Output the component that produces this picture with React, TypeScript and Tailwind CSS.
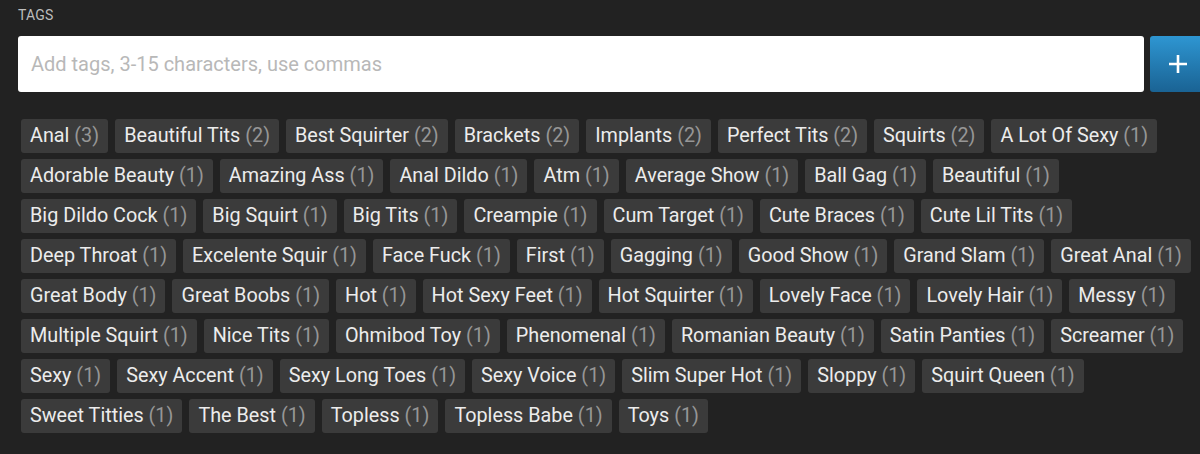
import React from 'react';

const tags: [string, number][] = [
  ['Anal', 3], ['Beautiful Tits', 2], ['Best Squirter', 2], ['Brackets', 2], ['Implants', 2],
  ['Perfect Tits', 2], ['Squirts', 2], ['A Lot Of Sexy', 1], ['Adorable Beauty', 1], ['Amazing Ass', 1],
  ['Anal Dildo', 1], ['Atm', 1], ['Average Show', 1], ['Ball Gag', 1], ['Beautiful', 1],
  ['Big Dildo Cock', 1], ['Big Squirt', 1], ['Big Tits', 1], ['Creampie', 1], ['Cum Target', 1],
  ['Cute Braces', 1], ['Cute Lil Tits', 1], ['Deep Throat', 1], ['Excelente Squir', 1], ['Face Fuck', 1],
  ['First', 1], ['Gagging', 1], ['Good Show', 1], ['Grand Slam', 1], ['Great Anal', 1],
  ['Great Body', 1], ['Great Boobs', 1], ['Hot', 1], ['Hot Sexy Feet', 1], ['Hot Squirter', 1],
  ['Lovely Face', 1], ['Lovely Hair', 1], ['Messy', 1], ['Multiple Squirt', 1], ['Nice Tits', 1],
  ['Ohmibod Toy', 1], ['Phenomenal', 1], ['Romanian Beauty', 1], ['Satin Panties', 1], ['Screamer', 1],
  ['Sexy', 1], ['Sexy Accent', 1], ['Sexy Long Toes', 1], ['Sexy Voice', 1], ['Slim Super Hot', 1],
  ['Sloppy', 1], ['Squirt Queen', 1], ['Sweet Titties', 1], ['The Best', 1], ['Topless', 1],
  ['Topless Babe', 1], ['Toys', 1],
];

export default function App() {
  return (
    <div className="min-h-[454px] w-[1200px] overflow-hidden bg-[#222222] font-['Roboto',sans-serif]">
      <div className="pl-[18px] pt-[6px]">
        <div className="text-[14px] leading-[18px] uppercase text-[#bdbdbd] tracking-[0.2px]">Tags</div>
        <div className="mt-[12px] flex gap-[6px]">
          <div className="flex h-[56px] w-[1126px] shrink-0 items-center rounded-[3px] bg-white px-[13px]">
            <span className="text-[20px] text-[#b8b8b8]">Add tags, 3-15 characters, use commas</span>
          </div>
          <button className="flex h-[56px] w-[60px] shrink-0 items-start justify-start rounded-[3px] bg-gradient-to-b from-[#2e96d2] to-[#1a6394] pl-[18px] pt-[18px]">
            <svg width="20" height="20" viewBox="0 0 20 20">
              <path d="M10 1v18M1 10h18" stroke="white" strokeWidth="2.6" />
            </svg>
          </button>
        </div>
        <div className="mt-[27px] flex w-[1182px] flex-wrap gap-x-[7px] gap-y-[6px] pl-[3px]">
          {tags.map(([name, n]) => (
            <div key={name} className="flex h-[34px] items-center whitespace-pre rounded-[3px] bg-[#3b3b3b] px-[9px] text-[19.8px] leading-none">
              <span className="text-[#ececec]">{name} </span>
              <span className="text-[#969696]">({n})</span>
            </div>
          ))}
        </div>
      </div>
    </div>
  );
}
